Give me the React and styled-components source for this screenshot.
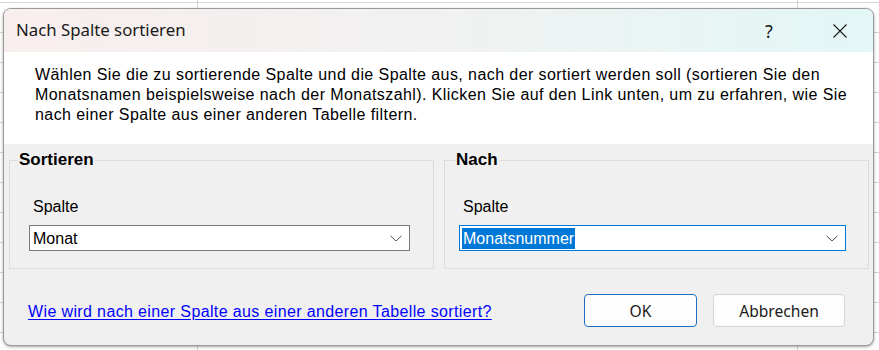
import React from "react";
import styled, { createGlobalStyle } from "styled-components";

const GlobalStyle = createGlobalStyle`
  html, body {
    margin: 0;
    padding: 0;
  }
  body {
    width: 879px;
    height: 350px;
    overflow: hidden;
    background-color: #ffffff;
    background-image:
      linear-gradient(to right, transparent 197px, #d4d4d4 197px, #d4d4d4 198px, transparent 198px, transparent 797px, #d4d4d4 797px, #d4d4d4 798px, transparent 798px),
      repeating-linear-gradient(to bottom, transparent 0, transparent 2px, #d4d4d4 2px, #d4d4d4 3px, transparent 3px, transparent 30px);
    font-family: "Liberation Sans", Arial, sans-serif;
  }
`;

const Desktop = styled.div`
  padding: 8px 0 0 3px;
`;

const Dialog = styled.div`
  width: 869px;
  height: 336px;
  border: 1px solid #9a9a9a;
  border-radius: 8px;
  overflow: hidden;
  background: #f0f0f0;
  box-shadow: 0 1px 3px rgba(0, 0, 0, 0.35);
  display: flex;
  flex-direction: column;
`;

const TitleBar = styled.div`
  height: 43px;
  flex: none;
  display: flex;
  align-items: center;
  padding-left: 12px;
  background: linear-gradient(to right, #f8eeed 0%, #f1f1f1 50%, #e2f7f6 100%);
`;

const Title = styled.div`
  flex: 1;
  font-family: "Noto Sans", "Open Sans", sans-serif;
  font-size: 16.8px;
  color: #1a1a1a;
  padding-bottom: 2px;
`;

const TitleButton = styled.div`
  width: 34px;
  height: 43px;
  margin-left: ${(p) => p.$ml}px;
  margin-right: ${(p) => p.$mr || 0}px;
  display: flex;
  align-items: center;
  justify-content: center;
  font-family: "Noto Sans", sans-serif;
  font-size: 18px;
  color: #1a1a1a;
`;

const Description = styled.div`
  height: 92px;
  flex: none;
  box-sizing: border-box;
  background: #ffffff;
  padding: 13px 20px 0 31px;
  font-size: 16px;
  letter-spacing: 0.42px;
  line-height: 20px;
  color: #000000;
`;

const Body = styled.div`
  flex: 1;
  display: flex;
  flex-direction: column;
`;

const Groups = styled.div`
  display: flex;
  gap: 10px;
  padding: 6px 0 0 5px;
`;

const Group = styled.fieldset`
  width: 425px;
  height: 119px;
  box-sizing: border-box;
  margin: 0;
  padding: 0 0 0 ${(p) => p.$inset}px;
  border: 1px solid #dcdcdc;
  min-width: 0;
`;

const Legend = styled.legend`
  margin-left: ${(p) => p.$offset}px;
  padding: 0 1px;
  font-size: 17px;
  font-weight: bold;
  color: #000000;
  line-height: 20px;
`;

const FieldLabel = styled.div`
  font-size: 16px;
  line-height: 18px;
  color: #000000;
  margin: 28px 0 9px 4px;
`;

const Combo = styled.div`
  width: ${(p) => p.$w}px;
  height: 26px;
  box-sizing: border-box;
  border: 1px solid ${(p) => (p.$focused ? "#0078d7" : "#7a7a7a")};
  background: #ffffff;
  display: flex;
  align-items: center;
  padding: 0 7px 0 2px;
`;

const ComboValue = styled.span`
  flex: 1;
  display: flex;
`;

const ComboText = styled.span`
  font-size: 16px;
  line-height: 21px;
  padding: 0 1px;
  color: ${(p) => (p.$selected ? "#ffffff" : "#000000")};
  background: ${(p) => (p.$selected ? "#0078d7" : "transparent")};
`;

const Footer = styled.div`
  display: flex;
  align-items: center;
  margin-top: 25px;
  padding: 0 28px 0 24px;
`;

const HelpLink = styled.a`
  flex: 1;
  font-size: 16px;
  letter-spacing: 0.37px;
  color: #0000ff;
  text-decoration: underline;
  text-underline-offset: 2px;
  cursor: pointer;
  padding-top: 2px;
`;

const Button = styled.button`
  width: ${(p) => p.$w}px;
  height: 33px;
  margin-left: ${(p) => p.$ml}px;
  box-sizing: border-box;
  border-radius: 4px;
  border: 1px solid ${(p) => (p.$primary ? "#1d6fc4" : "#d3d3d3")};
  background: #fdfdfd;
  font-family: "Noto Sans", sans-serif;
  font-size: 15.6px;
  color: #1a1a1a;
  padding: 0;
`;

const Chevron = () => (
  <svg width="12" height="7" viewBox="0 0 12 7">
    <path d="M0.5 0.8 L6 6 L11.5 0.8" fill="none" stroke="#555" strokeWidth="1" />
  </svg>
);

const CloseIcon = () => (
  <svg width="14" height="14" viewBox="0 0 14 14">
    <path d="M0.5 0.5 L13.5 13.5 M13.5 0.5 L0.5 13.5" stroke="#1a1a1a" strokeWidth="1.1" />
  </svg>
);

export default function App() {
  return (
    <>
      <GlobalStyle />
      <Desktop>
        <Dialog>
          <TitleBar>
            <Title>Nach Spalte sortieren</Title>
            <TitleButton $ml={0}>?</TitleButton>
            <TitleButton $ml={37} $mr={16}>
              <CloseIcon />
            </TitleButton>
          </TitleBar>
          <Description>
            Wählen Sie die zu sortierende Spalte und die Spalte aus, nach der sortiert werden soll (sortieren Sie den
            Monatsnamen beispielsweise nach der Monatszahl). Klicken Sie auf den Link unten, um zu erfahren, wie Sie
            nach einer Spalte aus einer anderen Tabelle filtern.
          </Description>
          <Body>
            <Groups>
              <Group $inset={19}>
                <Legend $offset={-11}>Sortieren</Legend>
                <FieldLabel>Spalte</FieldLabel>
                <Combo $w={381}>
                  <ComboValue>
                    <ComboText>Monat</ComboText>
                  </ComboValue>
                  <Chevron />
                </Combo>
              </Group>
              <Group $inset={14}>
                <Legend $offset={-4}>Nach</Legend>
                <FieldLabel>Spalte</FieldLabel>
                <Combo $w={387} $focused>
                  <ComboValue>
                    <ComboText $selected>Monatsnummer</ComboText>
                  </ComboValue>
                  <Chevron />
                </Combo>
              </Group>
            </Groups>
            <Footer>
              <HelpLink>Wie wird nach einer Spalte aus einer anderen Tabelle sortiert?</HelpLink>
              <Button $w={113} $ml={0} $primary>OK</Button>
              <Button $w={132} $ml={16}>Abbrechen</Button>
            </Footer>
          </Body>
        </Dialog>
      </Desktop>
    </>
  );
}
